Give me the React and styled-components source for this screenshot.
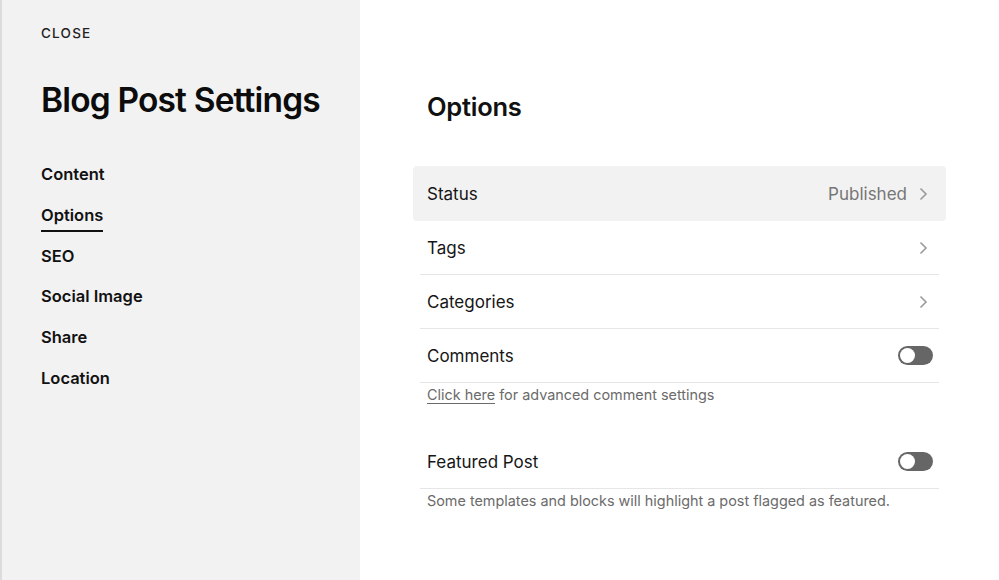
import React from "react";
import styled, { createGlobalStyle } from "styled-components";

const Global = createGlobalStyle`
  html, body { margin: 0; padding: 0; height: 100%; }
  body { font-family: Inter, "Noto Sans", sans-serif; color: #111; background: #fff; }
  #root { height: 100%; }
  * { box-sizing: border-box; }
`;

const Page = styled.div`
  display: flex;
  width: 999px;
  height: 580px;
  overflow: hidden;
`;

const Sidebar = styled.aside`
  width: 360px;
  flex: none;
  background: #f2f2f2;
  border-left: 2px solid #dcdcdc;
  padding: 26px 0 0 39px;
  display: flex;
  flex-direction: column;
`;

const CloseButton = styled.button`
  align-self: flex-start;
  background: none;
  border: none;
  padding: 0;
  font-family: Inter, sans-serif;
  font-size: 13.5px;
  font-weight: 500;
  letter-spacing: 0.09em;
  color: #222;
  line-height: 14px;
  cursor: pointer;
`;

const Title = styled.h1`
  margin: 40px 0 0;
  font-size: 33.5px;
  font-weight: 600;
  letter-spacing: -0.025em;
  line-height: 40px;
  color: #0c0c0c;
`;

const Nav = styled.nav`
  margin-top: 43px;
  display: flex;
  flex-direction: column;
  align-items: flex-start;
  gap: 16.8px;
`;

const NavItem = styled.a`
  font-size: 16.5px;
  font-weight: 600;
  line-height: 22px;
  color: #111;
  text-decoration: none;
  height: 28px;
  padding-bottom: 4px;
  margin-bottom: -4px;
  border-bottom: 2px solid ${(p) => (p.$active ? "#111" : "transparent")};
`;

const Main = styled.main`
  flex: 1;
  padding: 90px 53px 0 53px;
`;

const Heading = styled.h2`
  margin: 0 0 0 14px;
  font-size: 25.5px;
  font-weight: 600;
  letter-spacing: -0.01em;
  line-height: 34px;
  color: #111;
`;

const List = styled.div`
  margin-top: 42px;
  display: flex;
  flex-direction: column;
`;

const Row = styled.div`
  padding: 0 7px;
  border-radius: 4px;
  background: ${(p) => (p.$highlight ? "#f2f2f2" : "transparent")};
`;

const RowInner = styled.div`
  display: flex;
  align-items: center;
  justify-content: space-between;
  height: ${(p) => (p.$highlight ? "55px" : "54px")};
  padding: ${(p) => (p.$highlight ? "2px" : "1px")} 6px 0 7px;
  border-bottom: 1px solid ${(p) => (p.$highlight ? "transparent" : "#e6e6e6")};
`;

const Label = styled.span`
  font-size: 17px;
  font-weight: 400;
  color: #161616;
`;

const Right = styled.span`
  display: flex;
  align-items: center;
  gap: 11px;
  padding-right: 5px;
`;

const Value = styled.span`
  font-size: 17px;
  color: #767676;
`;

const Chevron = () => (
  <svg width="10" height="14" viewBox="0 0 10 14" fill="none">
    <path d="M2.5 1.5 L8 7 L2.5 12.5" stroke="#9a9a9a" strokeWidth="1.6" />
  </svg>
);

const Toggle = styled.span`
  position: relative;
  display: inline-block;
  width: 35px;
  height: 19px;
  border-radius: 10px;
  background: #666;
  margin-top: -2px;
  &::after {
    content: "";
    position: absolute;
    left: 2px;
    top: 2px;
    width: 15px;
    height: 15px;
    border-radius: 50%;
    background: #fff;
  }
`;

const Note = styled.p`
  margin: 0;
  padding: 3px 14px 0;
  font-size: 14.4px;
  line-height: 18px;
  color: #6b6b6b;
`;

const NoteLink = styled.a`
  color: #6b6b6b;
  text-decoration: none;
  border-bottom: 1px solid #6b6b6b;
`;

const Spacer = styled.div`
  height: ${(p) => p.$h}px;
`;

export default function App() {
  const nav = ["Content", "Options", "SEO", "Social Image", "Share", "Location"];
  return (
    <>
      <Global />
      <Page>
        <Sidebar>
          <CloseButton>CLOSE</CloseButton>
          <Title>Blog Post Settings</Title>
          <Nav>
            {nav.map((n) => (
              <NavItem key={n} $active={n === "Options"}>{n}</NavItem>
            ))}
          </Nav>
        </Sidebar>
        <Main>
          <Heading>Options</Heading>
          <List>
            <Row $highlight>
              <RowInner $highlight>
                <Label>Status</Label>
                <Right>
                  <Value>Published</Value>
                  <Chevron />
                </Right>
              </RowInner>
            </Row>
            <Row>
              <RowInner>
                <Label>Tags</Label>
                <Right><Chevron /></Right>
              </RowInner>
            </Row>
            <Row>
              <RowInner>
                <Label>Categories</Label>
                <Right><Chevron /></Right>
              </RowInner>
            </Row>
            <Row>
              <RowInner>
                <Label>Comments</Label>
                <Toggle />
              </RowInner>
            </Row>
            <Note>
              <NoteLink>Click here</NoteLink> for advanced comment settings
            </Note>
            <Spacer $h={31} />
            <Row>
              <RowInner>
                <Label>Featured Post</Label>
                <Toggle />
              </RowInner>
            </Row>
            <Note>Some templates and blocks will highlight a post flagged as featured.</Note>
          </List>
        </Main>
      </Page>
    </>
  );
}
